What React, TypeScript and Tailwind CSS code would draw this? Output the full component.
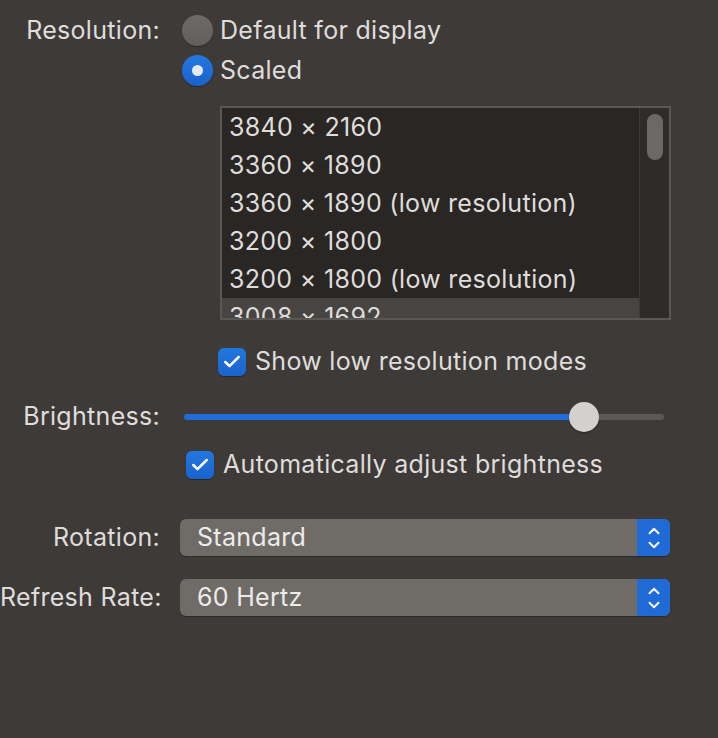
import { Check, ChevronDown, ChevronUp } from 'lucide-react'

const resolutions = [
  '3840 × 2160',
  '3360 × 1890',
  '3360 × 1890 (low resolution)',
  '3200 × 1800',
  '3200 × 1800 (low resolution)',
  '3008 × 1692',
]

function Radio({ checked, label }: { checked?: boolean; label: string }) {
  return (
    <div className="flex h-10 items-center">
      {checked ? (
        <span className="ml-[2px] flex h-[31px] w-[31px] items-center justify-center rounded-full bg-gradient-to-b from-[#2378e0] to-[#1a62cc] shadow-[0_1px_1px_rgba(0,0,0,0.35)]">
          <span className="h-[11px] w-[11px] rounded-full bg-[#e4e8ef]" />
        </span>
      ) : (
        <span className="ml-[2px] h-[31px] w-[31px] rounded-full bg-gradient-to-b from-[#6d6a67] to-[#615e5b] shadow-[0_1px_1px_rgba(0,0,0,0.35)]" />
      )}
      <span className="ml-[7px]">{label}</span>
    </div>
  )
}

function Checkbox({ label }: { label: string }) {
  return (
    <div className="flex h-[35px] items-center">
      <span className="flex h-[28px] w-[28px] items-center justify-center rounded-[6px] bg-gradient-to-b from-[#2377e0] to-[#1a63cd] shadow-[0_1px_1px_rgba(0,0,0,0.35)]">
        <Check className="h-[20px] w-[20px] text-white" strokeWidth={3} />
      </span>
      <span className="ml-[9px]">{label}</span>
    </div>
  )
}

function Popup({ value }: { value: string }) {
  return (
    <div className="flex h-[37px] w-[490px] items-center rounded-[6px] bg-[#6f6c68] shadow-[0_1px_1px_rgba(0,0,0,0.3)]">
      <span className="flex-1 pl-[17px] text-[#ecebe9]">{value}</span>
      <span className="flex h-full w-[33px] flex-col items-center justify-center rounded-r-[6px] bg-[#1f6ad6]">
        <ChevronUp className="-mb-[2px] h-[18px] w-[18px] text-white" strokeWidth={2.5} />
        <ChevronDown className="-mt-[2px] h-[18px] w-[18px] text-white" strokeWidth={2.5} />
      </span>
    </div>
  )
}

export default function App() {
  return (
    <div
      className="min-h-screen w-full bg-[#3e3a37] pt-[10px] text-[25px] leading-[35px] tracking-[0.3px] text-[#dfdddb]"
      style={{ fontFamily: 'Inter, "Noto Sans", sans-serif' }}
    >
      {/* Resolution */}
      <div className="flex">
        <div className="flex h-10 w-[160px] items-center justify-end">Resolution:</div>
        <div className="ml-[20px] flex flex-col">
          <Radio label="Default for display" />
          <Radio checked label="Scaled" />

          <div className="ml-[40px] mt-[16px] flex h-[214px] w-[451px] border-2 border-[#5a5755] bg-[#2a2623]">
            <div className="flex-1 overflow-hidden">
              {resolutions.map((r, i) => (
                <div
                  key={r}
                  className={`flex h-[38px] items-center whitespace-nowrap pl-[7px] leading-none ${i === 5 ? 'bg-[#474441]' : ''}`}
                >
                  {r}
                </div>
              ))}
            </div>
            <div className="w-[30px] border-l border-[#3c3936] bg-[#2e2b29] pt-[6px]">
              <div className="ml-[7px] h-[46px] w-[16px] rounded-full bg-[#6b6967]" />
            </div>
          </div>

          <div className="ml-[38px] mt-[24px]">
            <Checkbox label="Show low resolution modes" />
          </div>
        </div>
      </div>

      {/* Brightness */}
      <div className="mt-[20px] flex items-center">
        <div className="w-[160px] whitespace-nowrap text-right">Brightness:</div>
        <div className="ml-[24px] flex h-[30px] w-[480px] items-center">
          <div className="h-[6px] w-[386px] rounded-l-full bg-[#1f6ddb]" />
          <div className="-ml-[1px] h-[30px] w-[30px] shrink-0 rounded-full bg-[#d3d1ce] shadow-[0_1px_2px_rgba(0,0,0,0.4)]" />
          <div className="h-[6px] flex-1 rounded-r-full bg-[#5b5855]" />
        </div>
      </div>

      <div className="ml-[186px] mt-[13px]">
        <Checkbox label="Automatically adjust brightness" />
      </div>

      {/* Rotation */}
      <div className="mt-[37px] flex items-center">
        <div className="w-[160px] text-right">Rotation:</div>
        <div className="ml-[20px]">
          <Popup value="Standard" />
        </div>
      </div>

      {/* Refresh Rate */}
      <div className="mt-[23px] flex items-center">
        <div className="w-[160px] whitespace-nowrap text-right">Refresh Rate:</div>
        <div className="ml-[20px]">
          <Popup value="60 Hertz" />
        </div>
      </div>
    </div>
  )
}
